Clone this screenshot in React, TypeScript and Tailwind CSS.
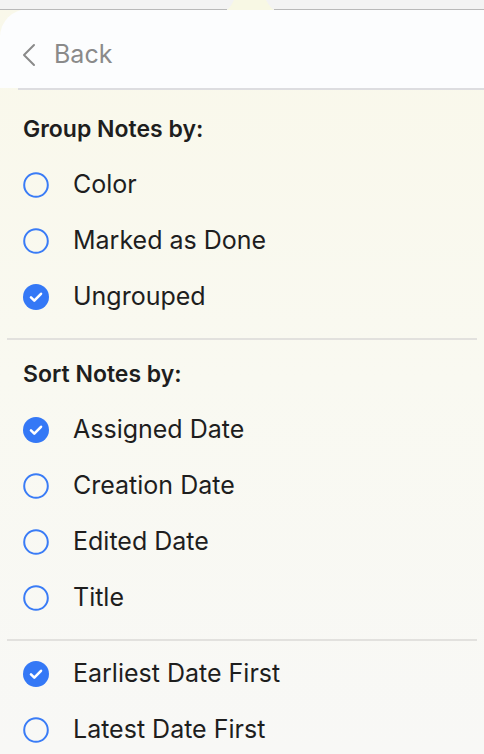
import React from "react";

const FONT = { fontFamily: 'Inter, "Noto Sans", "Liberation Sans", sans-serif' };

type Option = { label: string; checked?: boolean };

const GROUP: Option[] = [{ label: "Color" }, { label: "Marked as Done" }, { label: "Ungrouped", checked: true }];
const SORT: Option[] = [
  { label: "Assigned Date", checked: true },
  { label: "Creation Date" },
  { label: "Edited Date" },
  { label: "Title" },
];
const ORDER: Option[] = [{ label: "Earliest Date First", checked: true }, { label: "Latest Date First" }];

function Radio({ checked }: { checked?: boolean }) {
  if (checked) {
    return (
      <svg width="26" height="26" viewBox="0 0 26 26" aria-hidden="true">
        <circle cx="13" cy="13" r="13" fill="#3478f6" />
        <path d="M8 13.4l3.3 3.2L18 9.8" fill="none" stroke="#fff" strokeWidth="2.6" strokeLinecap="round" strokeLinejoin="round" />
      </svg>
    );
  }
  return (
    <svg width="26" height="26" viewBox="0 0 26 26" aria-hidden="true">
      <circle cx="13" cy="13" r="11.8" fill="none" stroke="#3a7cf6" strokeWidth="2" />
    </svg>
  );
}

function Row({ label, checked }: Option) {
  return (
    <div className="h-[56px] flex items-center pl-[23px]">
      <Radio checked={checked} />
      <span className="ml-[24px] text-[25px] text-[#1e1e1e]">{label}</span>
    </div>
  );
}

function Heading({ children }: { children: React.ReactNode }) {
  return (
    <div className="h-[56px] flex items-center pl-[23px] text-[23px] font-semibold text-[#1e1e1e]">{children}</div>
  );
}

function Divider() {
  return <div className="mx-[7px] h-[2px] bg-[#e2e1de]" />;
}

export default function App() {
  return (
    <div
      className="w-[484px] h-[754px] overflow-hidden bg-gradient-to-b from-[#f9f8ea] via-[#f9f9f1] to-[#f8f8f6]"
      style={FONT}
    >
      {/* top edge of the parent window with the popover notch */}
      <svg width="484" height="10" viewBox="0 0 484 10" className="block" aria-hidden="true">
        <rect x="0" y="0" width="484" height="10" fill="#f8f8e4" />
        <path d="M0 0H234C231 5 230 8 227 10H0Z" fill="#f3f3f3" />
        <path d="M266 0H484V10H274C271 8 269 5 266 0Z" fill="#f3f3f3" />
        <path d="M0 9.5H227M274 9.5H484" stroke="#b9b9b9" strokeWidth="1" />
      </svg>

      <div className="bg-[#fcfdfe] rounded-tl-[28px] -mt-[1px]">
        <div className="h-[79px] flex items-center pl-[22px] pt-[12px]">
          <svg width="14" height="24" viewBox="0 0 14 24" aria-hidden="true">
            <path d="M12 2L2 12l10 10" fill="none" stroke="#8a8a8a" strokeWidth="2" strokeLinecap="round" strokeLinejoin="round" />
          </svg>
          <span className="ml-[18px] text-[25px] text-[#8a8a8a]">Back</span>
        </div>
      </div>
      <div className="ml-[18px] h-[2px] bg-[#dddde0]" />

      <div className="pt-[11px] pb-[13px]">
        <Heading>Group Notes by:</Heading>
        {GROUP.map((o) => (
          <Row key={o.label} {...o} />
        ))}
      </div>
      <Divider />
      <div className="pt-[6px] pb-[13px]">
        <Heading>Sort Notes by:</Heading>
        {SORT.map((o) => (
          <Row key={o.label} {...o} />
        ))}
      </div>
      <Divider />
      <div className="pt-[5px]">
        {ORDER.map((o) => (
          <Row key={o.label} {...o} />
        ))}
      </div>
    </div>
  );
}
